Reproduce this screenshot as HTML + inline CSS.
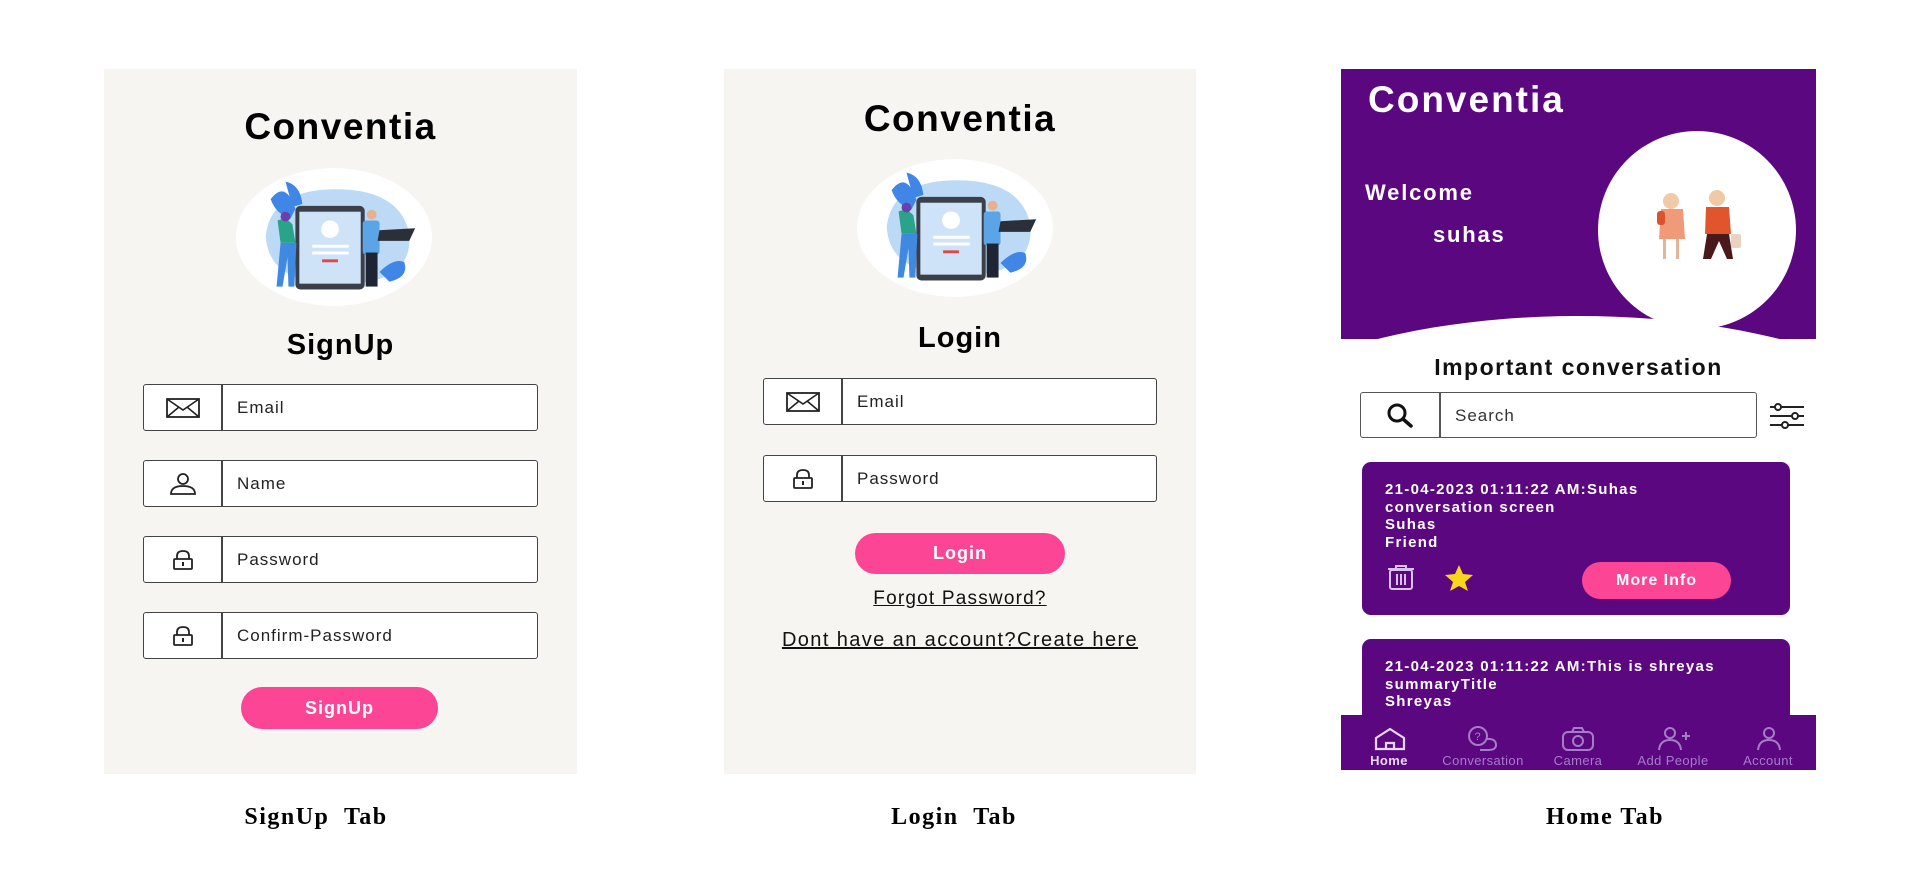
<!DOCTYPE html>
<html><head><meta charset="utf-8"><style>
*{margin:0;padding:0;box-sizing:border-box}
body{width:1920px;height:876px;background:#fff;position:relative;overflow:hidden;font-family:"Liberation Sans",Arial,sans-serif}
.abs{position:absolute}
.panel{position:absolute;background:#f6f5f2}
.title{position:absolute;left:0;right:0;text-align:center;font-weight:bold;color:#000}
.inp{position:absolute;height:47px;border:1.5px solid #444;border-radius:3px;background:#fff}
.inp .ic{position:absolute;left:0;top:0;bottom:0;width:79px;border-right:2px solid #444;display:flex;align-items:center;justify-content:center}
.inp .tx{position:absolute;left:93px;top:0;bottom:0;display:flex;align-items:center;font-size:17px;letter-spacing:1px;color:#222}
.btn{position:absolute;background:#fd4596;border-radius:22px;color:#fff;font-weight:bold;font-size:18px;letter-spacing:1px;display:flex;align-items:center;justify-content:center}
.cap{position:absolute;top:804px;font-family:"Liberation Serif",serif;font-weight:bold;font-size:24px;letter-spacing:1.5px;text-align:center;width:300px}
.card{position:absolute;left:1362px;width:428px;background:#5a0780;border-radius:9px;color:#fff;font-weight:bold;font-size:15px}
.card p{position:absolute;left:23px;line-height:17.5px;letter-spacing:1.3px}
.nav{position:absolute;text-align:center;font-size:13px;letter-spacing:.4px;color:#a57cc7;width:110px}
</style></head><body>

<!-- SignUp -->
<div class="panel" style="left:104px;top:69px;width:473px;height:705px">
<div class="title" style="top:37px;font-size:37px;letter-spacing:1.5px">Conventia</div>
<svg class="abs" style="left:132px;top:99px" width="196" height="138" viewBox="5 8 198 142" preserveAspectRatio="none">
<ellipse cx="104" cy="79" rx="99" ry="71" fill="#fff"/>
<path d="M35 78 Q40 32 100 30 Q170 28 180 75 Q185 128 110 127 Q38 128 35 78Z" fill="#bcdaf5"/>
<path d="M40 40 Q55 20 65 50 L60 60 Q45 55 40 40Z M55 22 Q70 25 72 45 L62 48Z" fill="#3f86e6"/>
<path d="M150 115 Q165 100 175 105 Q180 120 160 125Z" fill="#3f86e6"/>
<rect x="65" y="47" width="70" height="86" rx="5" fill="#3b3f4a"/>
<rect x="69" y="53" width="62" height="74" fill="#cfe3f8"/>
<circle cx="100" cy="71" r="9" fill="#fff"/>
<rect x="82" y="87" width="37" height="3" fill="#fff"/><rect x="82" y="94" width="37" height="3" fill="#fff"/>
<rect x="92" y="102" width="16" height="3" fill="#e04848"/>
<path d="M47 62 Q55 58 62 66 L65 85 L50 85Z" fill="#29a38a"/>
<path d="M50 85 L66 85 L64 130 L58 130 L57 100 L52 130 L46 130Z" fill="#3f8ae0"/>
<circle cx="55" cy="58" r="5" fill="#6a3fb0"/>
<rect x="133" y="62" width="17" height="35" rx="3" fill="#5ba5e6"/>
<rect x="136" y="95" width="12" height="35" fill="#1d2433"/>
<circle cx="142" cy="56" r="5" fill="#e8b08c"/>
<path d="M150 72 L186 70 L180 83 L148 83Z" fill="#2b2f3a"/>
</svg>
<div class="title" style="top:260px;font-size:29px;letter-spacing:1px">SignUp</div>
</div>
<div class="inp" style="left:143px;top:384px;width:395px"><div class="ic"><svg width="34" height="20" viewBox="0 0 34 20"><rect x="1" y="1" width="32" height="18" fill="none" stroke="#222" stroke-width="1.8"/><path d="M1 1 L17 12 L33 1 M1 19 L13 9 M33 19 L21 9" fill="none" stroke="#222" stroke-width="1.6"/></svg></div><div class="tx">Email</div></div>
<div class="inp" style="left:143px;top:460px;width:395px"><div class="ic"><svg width="28" height="24" viewBox="0 0 28 24"><circle cx="14" cy="7" r="5" fill="none" stroke="#222" stroke-width="1.8"/><path d="M2 22 Q2 14 14 14 Q26 14 26 22Z" fill="none" stroke="#222" stroke-width="1.8"/></svg></div><div class="tx">Name</div></div>
<div class="inp" style="left:143px;top:536px;width:395px"><div class="ic"><svg width="22" height="22" viewBox="0 0 22 22"><path d="M5 10 V7 Q5 2 11 2 Q17 2 17 7 V10" fill="none" stroke="#222" stroke-width="1.8"/><rect x="2" y="10" width="18" height="10" rx="1" fill="none" stroke="#222" stroke-width="1.8"/><rect x="10" y="13" width="2" height="4" fill="#222"/></svg></div><div class="tx">Password</div></div>
<div class="inp" style="left:143px;top:612px;width:395px"><div class="ic"><svg width="22" height="22" viewBox="0 0 22 22"><path d="M5 10 V7 Q5 2 11 2 Q17 2 17 7 V10" fill="none" stroke="#222" stroke-width="1.8"/><rect x="2" y="10" width="18" height="10" rx="1" fill="none" stroke="#222" stroke-width="1.8"/><rect x="10" y="13" width="2" height="4" fill="#222"/></svg></div><div class="tx">Confirm-Password</div></div>
<div class="btn" style="left:241px;top:687px;width:197px;height:42px">SignUp</div>
<div class="cap" style="left:166px">SignUp&nbsp; Tab</div>

<!-- Login -->
<div class="panel" style="left:724px;top:69px;width:472px;height:705px">
<div class="title" style="top:29px;font-size:37px;letter-spacing:1.5px">Conventia</div>
<svg class="abs" style="left:133px;top:90px" width="196" height="138" viewBox="5 8 198 142" preserveAspectRatio="none">
<ellipse cx="104" cy="79" rx="99" ry="71" fill="#fff"/>
<path d="M35 78 Q40 32 100 30 Q170 28 180 75 Q185 128 110 127 Q38 128 35 78Z" fill="#bcdaf5"/>
<path d="M40 40 Q55 20 65 50 L60 60 Q45 55 40 40Z M55 22 Q70 25 72 45 L62 48Z" fill="#3f86e6"/>
<path d="M150 115 Q165 100 175 105 Q180 120 160 125Z" fill="#3f86e6"/>
<rect x="65" y="47" width="70" height="86" rx="5" fill="#3b3f4a"/>
<rect x="69" y="53" width="62" height="74" fill="#cfe3f8"/>
<circle cx="100" cy="71" r="9" fill="#fff"/>
<rect x="82" y="87" width="37" height="3" fill="#fff"/><rect x="82" y="94" width="37" height="3" fill="#fff"/>
<rect x="92" y="102" width="16" height="3" fill="#e04848"/>
<path d="M47 62 Q55 58 62 66 L65 85 L50 85Z" fill="#29a38a"/>
<path d="M50 85 L66 85 L64 130 L58 130 L57 100 L52 130 L46 130Z" fill="#3f8ae0"/>
<circle cx="55" cy="58" r="5" fill="#6a3fb0"/>
<rect x="133" y="62" width="17" height="35" rx="3" fill="#5ba5e6"/>
<rect x="136" y="95" width="12" height="35" fill="#1d2433"/>
<circle cx="142" cy="56" r="5" fill="#e8b08c"/>
<path d="M150 72 L186 70 L180 83 L148 83Z" fill="#2b2f3a"/>
</svg>
<div class="title" style="top:253px;font-size:29px;letter-spacing:1px">Login</div>
<div class="abs" style="left:0;right:0;top:519px;text-align:center;font-size:19px;letter-spacing:1.2px;text-decoration:underline;color:#111">Forgot Password?</div>
<div class="abs" style="left:0;right:0;top:560px;text-align:center;font-size:20px;letter-spacing:1.4px;text-decoration:underline;color:#111">Dont have an account?Create here</div>
</div>
<div class="inp" style="left:763px;top:378px;width:394px"><div class="ic"><svg width="34" height="20" viewBox="0 0 34 20"><rect x="1" y="1" width="32" height="18" fill="none" stroke="#222" stroke-width="1.8"/><path d="M1 1 L17 12 L33 1 M1 19 L13 9 M33 19 L21 9" fill="none" stroke="#222" stroke-width="1.6"/></svg></div><div class="tx">Email</div></div>
<div class="inp" style="left:763px;top:455px;width:394px"><div class="ic"><svg width="22" height="22" viewBox="0 0 22 22"><path d="M5 10 V7 Q5 2 11 2 Q17 2 17 7 V10" fill="none" stroke="#222" stroke-width="1.8"/><rect x="2" y="10" width="18" height="10" rx="1" fill="none" stroke="#222" stroke-width="1.8"/><rect x="10" y="13" width="2" height="4" fill="#222"/></svg></div><div class="tx">Password</div></div>
<div class="btn" style="left:855px;top:533px;width:210px;height:41px">Login</div>
<div class="cap" style="left:804px">Login&nbsp; Tab</div>

<!-- Home -->
<div class="abs" style="left:1341px;top:69px;width:475px;height:701px;background:#fff;overflow:hidden">
<div class="abs" style="left:0;top:0;width:475px;height:270px;background:#5a0780"></div>
<div class="abs" style="left:-140px;top:247px;width:755px;height:300px;border-radius:50%;background:#fff"></div>
<div class="abs" style="left:27px;top:10px;font-size:37px;letter-spacing:2px;font-weight:bold;color:#fff">Conventia</div>
<div class="abs" style="left:24px;top:111px;font-size:22px;letter-spacing:1.8px;font-weight:bold;color:#fff">Welcome</div>
<div class="abs" style="left:92px;top:153px;font-size:22px;letter-spacing:1.8px;font-weight:bold;color:#fff">suhas</div>
<div class="abs" style="left:257px;top:62px;width:198px;height:198px;border-radius:50%;background:#fff"></div>
<svg class="abs" style="left:310px;top:120px" width="100" height="75" viewBox="0 0 100 75">
<circle cx="20" cy="12" r="8" fill="#f1c9a6"/><path d="M10 20 H32 L34 50 H8Z" fill="#f09a7a"/><rect x="12" y="50" width="3" height="20" fill="#e2b59a"/><rect x="25" y="50" width="3" height="20" fill="#e2b59a"/><rect x="6" y="22" width="8" height="14" rx="3" fill="#d9532b"/>
<circle cx="66" cy="9" r="8" fill="#f1c9a6"/><path d="M55 18 H78 L80 45 H54Z" fill="#e0552c"/><path d="M56 45 H78 L82 70 H76 L68 52 L60 70 H52Z" fill="#4a1a1a"/><rect x="80" y="45" width="10" height="14" rx="2" fill="#e8d3c0"/>
</svg>
<div class="abs" style="left:0;right:0;top:285px;text-align:center;font-size:23px;letter-spacing:1.5px;font-weight:bold;color:#111">Important conversation</div>
<div class="abs" style="left:19px;top:323px;width:397px;height:46px;border:1.5px solid #555;border-radius:3px;background:#fff">
<div class="abs" style="left:0;top:0;bottom:0;width:80px;border-right:2px solid #555;display:flex;align-items:center;justify-content:center"><svg width="28" height="26" viewBox="0 0 28 26"><circle cx="11" cy="11" r="8" fill="none" stroke="#111" stroke-width="3"/><path d="M17 17 L25 24" stroke="#111" stroke-width="3.5" stroke-linecap="round"/></svg></div>
<div class="abs" style="left:94px;top:13px;font-size:17px;letter-spacing:1px;color:#333">Search</div></div>
<svg class="abs" style="left:428px;top:333px" width="36" height="28" viewBox="0 0 36 28"><g stroke="#222" stroke-width="2" fill="#fff"><path d="M1 5 H35 M1 14 H35 M1 23 H35"/><circle cx="9" cy="5" r="3"/><circle cx="26" cy="14" r="3"/><circle cx="16" cy="23" r="3"/></g></svg>
</div>
<div class="card" style="top:462px;height:153px">
<p style="top:19px">21-04-2023 01:11:22 AM:Suhas<br>conversation screen<br>Suhas<br>Friend</p>
<svg class="abs" style="left:25px;top:103px" width="28" height="26" viewBox="0 0 28 26"><g fill="none" stroke="#d8c3ea" stroke-width="2"><path d="M1 4 H27 M9 4 V1 H19 V4"/><rect x="3" y="5" width="22" height="19" rx="2"/><path d="M10 9 V20 M14 9 V20 M18 9 V20"/></g></svg>
<svg class="abs" style="left:82px;top:102px" width="30" height="28" viewBox="0 0 30 28"><path d="M15 1 L19 10 L29 11 L21 18 L24 27 L15 22 L6 27 L9 18 L1 11 L11 10Z" fill="#f9d51b"/></svg>
<div class="btn" style="left:220px;top:100px;width:149px;height:37px;font-size:16px">More Info</div>
</div>
<div class="card" style="top:639px;height:100px">
<p style="top:19px">21-04-2023 01:11:22 AM:This is shreyas<br>summaryTitle<br>Shreyas</p>
</div>
<div class="abs" style="left:1341px;top:715px;width:475px;height:55px;background:#5a0780"></div>
<svg class="abs" style="left:1373px;top:727px" width="34" height="24" viewBox="0 0 34 24"><path d="M3 11 L17 2 L31 11 V22 H3Z M13 22 V16 H21 V22" fill="none" stroke="#e6d8f2" stroke-width="2.2"/></svg>
<svg class="abs" style="left:1466px;top:726px" width="36" height="26" viewBox="0 0 36 26"><g fill="none" stroke="#a57cc7" stroke-width="2"><circle cx="12" cy="10" r="9"/><path d="M20 13 Q30 12 30 19 Q30 24 22 24 H14"/></g><text x="8.5" y="14" font-size="11" fill="#a57cc7" font-family="Liberation Sans">?</text></svg>
<svg class="abs" style="left:1561px;top:727px" width="34" height="24" viewBox="0 0 34 24"><g fill="none" stroke="#a57cc7" stroke-width="2"><rect x="2" y="5" width="30" height="18" rx="5"/><path d="M11 5 L13 1 H21 L23 5"/><circle cx="17" cy="14" r="5"/></g></svg>
<svg class="abs" style="left:1656px;top:727px" width="36" height="24" viewBox="0 0 36 24"><g fill="none" stroke="#a57cc7" stroke-width="2"><circle cx="14" cy="6" r="5"/><path d="M3 23 Q4 13 14 13 Q24 13 25 23"/><path d="M26 9 H34 M30 5 V13"/></g></svg>
<svg class="abs" style="left:1755px;top:727px" width="28" height="24" viewBox="0 0 28 24"><g fill="none" stroke="#a57cc7" stroke-width="2"><circle cx="14" cy="6" r="5"/><path d="M3 23 Q4 13 14 13 Q24 13 25 23"/></g></svg>
<div class="nav" style="left:1334px;top:753px;color:#e6d8f2;font-weight:bold">Home</div>
<div class="nav" style="left:1428px;top:753px">Conversation</div>
<div class="nav" style="left:1523px;top:753px">Camera</div>
<div class="nav" style="left:1618px;top:753px">Add People</div>
<div class="nav" style="left:1713px;top:753px">Account</div>
<div class="cap" style="left:1455px">Home Tab</div>
</body></html>
